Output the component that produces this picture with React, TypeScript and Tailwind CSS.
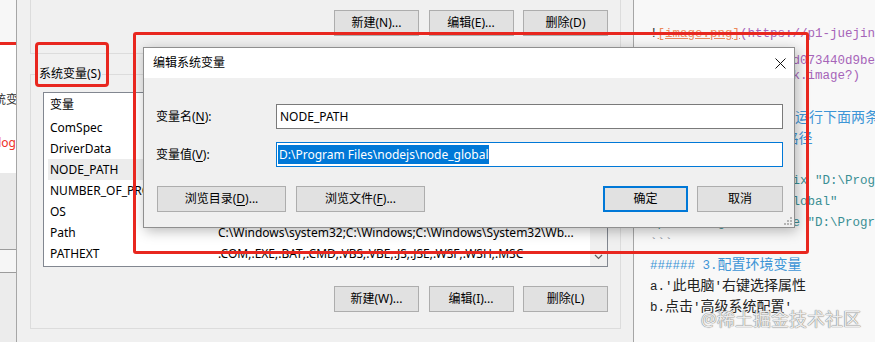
import type { ReactNode } from "react";

const uiFont = "font-['Noto_Sans','Noto_Sans_CJK_SC',sans-serif]";
const monoFont = "font-['Liberation_Mono','Noto_Sans_CJK_SC',monospace]";

type WinButtonProps = {
  children: ReactNode;
  className?: string;
  isDefault?: boolean;
};

function WinButton({ children, className = "", isDefault = false }: WinButtonProps) {
  const border = isDefault ? "border-2 border-[#0078d7]" : "border border-[#adadad]";
  return (
    <div
      className={`flex h-[26px] shrink-0 items-center justify-center bg-[#e1e1e1] text-[12px] text-black ${border} ${className}`}
    >
      {children}
    </div>
  );
}

function Key({ children }: { children: ReactNode }) {
  return <span className="underline underline-offset-2">{children}</span>;
}

function ChevronDown() {
  return (
    <svg width="9" height="6" viewBox="0 0 9 6" fill="none">
      <path d="M1 1 L4.5 4.5 L8 1" stroke="#606060" strokeWidth="1.2" />
    </svg>
  );
}

function ChevronUp() {
  return (
    <svg width="9" height="6" viewBox="0 0 9 6" fill="none">
      <path d="M1 5 L4.5 1.5 L8 5" stroke="#606060" strokeWidth="1.2" />
    </svg>
  );
}

function LeftStrip() {
  return (
    <div className={`flex w-[16px] shrink-0 flex-col ${uiFont}`}>
      <div className="h-[42px] bg-[#f7f7f7]" />
      <div className="h-[3px] bg-[#e8271f]" />
      <div className="h-[128px] overflow-hidden bg-white pt-[47px] text-[12px]">
        <div className="-ml-[18px] h-[16px] whitespace-nowrap leading-[16px] text-[#333]">系统变量</div>
        <div className="mt-[27px] flex h-[16px] justify-end whitespace-nowrap leading-[16px] text-[#ee2f27]">
          Blog
        </div>
      </div>
      <div className="h-[76px] bg-[#e9e9e9]" />
      <div className="h-[1px] bg-[#9c9c9c]" />
      <div className="h-[22px] bg-[#f6f6f6]" />
      <div className="h-[1px] bg-[#9c9c9c]" />
      <div className="flex-1 bg-[#ececec]" />
    </div>
  );
}

const variables = [
  { name: "ComSpec", value: "C:\\Windows\\system32\\cmd.exe" },
  { name: "DriverData", value: "C:\\Windows\\System32\\Drivers\\DriverData" },
  { name: "NODE_PATH", value: "D:\\Program Files\\nodejs\\node_global" },
  { name: "NUMBER_OF_PROCESSORS", value: "8" },
  { name: "OS", value: "Windows_NT" },
  { name: "Path", value: "C:\\Windows\\system32;C:\\Windows;C:\\Windows\\System32\\Wb..." },
  { name: "PATHEXT", value: ".COM;.EXE;.BAT;.CMD;.VBS;.VBE;.JS;.JSE;.WSF;.WSH;.MSC" },
];

function VariableList() {
  return (
    <div className="mt-[10px] flex h-[175px] border border-[#828790] bg-white text-[12px] text-black">
      <div className="min-w-0 flex-1">
        <div className="mx-[4px] flex h-[24px] items-center px-[2px]">
          <div className="w-[168px] shrink-0">变量</div>
          <div>值</div>
        </div>
        {variables.map((variable) => (
          <div
            key={variable.name}
            className={`mx-[4px] flex h-[21px] items-center px-[2px] ${variable.name === "NODE_PATH" ? "bg-[#ececec]" : ""}`}
          >
            <div className="w-[168px] shrink-0 overflow-hidden whitespace-nowrap">{variable.name}</div>
            <div className="min-w-0 whitespace-nowrap">{variable.value}</div>
          </div>
        ))}
      </div>
      <div className="flex w-[17px] shrink-0 flex-col items-center justify-between bg-[#f0f0f0] py-[6px]">
        <ChevronUp />
        <ChevronDown />
      </div>
    </div>
  );
}

function EnvironmentWindow() {
  return (
    <div className={`flex w-[618px] shrink-0 flex-col border-x border-[#a6a6a6] bg-[#f0f0f0] pl-[13px] pr-[12px] ${uiFont}`}>
      <div className="flex h-[54px] shrink-0 justify-end gap-[9.5px] border-x border-b border-[#dcdcdc] pr-[12px] pt-[10px]">
        <WinButton className="w-[85px]">新建(N)...</WinButton>
        <WinButton className="w-[85px]">编辑(E)...</WinButton>
        <WinButton className="w-[85px]">删除(D)</WinButton>
      </div>
      <fieldset className="mt-[12px] border border-[#dcdcdc] px-[12px] pb-[16px]">
        <legend className="-ml-[5px] px-[1px] text-[12px] leading-[16px] text-black">系统变量(S)</legend>
        <VariableList />
        <div className="mt-[19px] flex justify-end gap-[9.5px]">
          <WinButton className="w-[85px]">新建(W)...</WinButton>
          <WinButton className="w-[85px]">编辑(I)...</WinButton>
          <WinButton className="w-[85px]">删除(L)</WinButton>
        </div>
      </fieldset>
    </div>
  );
}

function Line({ children, className = "h-[21px]" }: { children?: ReactNode; className?: string }) {
  return <div className={`whitespace-nowrap leading-[21px] ${className}`}>{children}</div>;
}

function Cjk({ children }: { children: ReactNode }) {
  return <span className="text-[14px]">{children}</span>;
}

function MarkdownEditor() {
  return (
    <div className={`relative min-w-0 flex-1 overflow-hidden bg-[#f8f8f8] pl-[16px] pt-[24px] text-[12.5px] ${monoFont}`}>
      <Line className="h-[27px]">
        <span className="text-[#333]">!</span>
        <span className="text-[#ec8a5c] underline">[image.png]</span>
        <span className="text-[#a664b8]">(https://p1-juejin.byteimg.com/tos-cn-i-k3u1fbpfcp/</span>
      </Line>
      <Line className="h-[15px]">
        <span className="text-[#a664b8]">a2c6f7b41e8c4b3f9a6d073440d9be~tplv-</span>
      </Line>
      <Line>
        <span className="text-[#a664b8]">k3u1fbpfcp-watermark.image?)</span>
      </Line>
      <Line />
      <Line>
        <span className="text-[#3d95d6]">
          ###### 2.<Cjk>新建文件夹</Cjk>,<Cjk>运行下面两条命令设置全局路</Cjk>
        </span>
      </Line>
      <Line>
        <span className="text-[#3d95d6]">
          <Cjk>设置</Cjk>npm<Cjk>全局模块存放路径</Cjk>
        </span>
      </Line>
      <Line>
        <span className="text-[#7d8a96]">```</span>
      </Line>
      <Line>
        <span className="text-[#3a8f94]">npm config set prefix "D:\Program</span>
      </Line>
      <Line>
        <span className="text-[#3a8f94]">Files\nodejs\node_global"</span>
      </Line>
      <Line>
        <span className="text-[#3a8f94]">npm config set cache "D:\Program Files\nodejs\node_cache"</span>
      </Line>
      <Line>
        <span className="text-[#7d8a96]">```</span>
      </Line>
      <Line>
        <span className="text-[#3d95d6]">
          ###### 3.<Cjk>配置环境变量</Cjk>
        </span>
      </Line>
      <Line>
        <span className="text-[#222]">
          a.'<Cjk>此电脑</Cjk>'<Cjk>右键选择属性</Cjk>
        </span>
      </Line>
      <Line>
        <span className="text-[#222]">
          b.<Cjk>点击</Cjk>'<Cjk>高级系统配置</Cjk>'
        </span>
      </Line>
      <div
        className={`absolute bottom-[13px] right-[14px] text-[18px] leading-[20px] text-[#ececec] [text-shadow:0_0_1px_#7a7a7a,0_0_1px_#7a7a7a] ${uiFont}`}
      >
        @稀土掘金技术社区
      </div>
    </div>
  );
}

function CloseIcon() {
  return (
    <svg width="11" height="11" viewBox="0 0 11 11" fill="none">
      <path d="M0.5 0.5 L10.5 10.5 M10.5 0.5 L0.5 10.5" stroke="#111" strokeWidth="1" />
    </svg>
  );
}

function ResizeGrip() {
  return (
    <svg width="10" height="10" viewBox="0 0 10 10" className="absolute bottom-[2px] right-[2px]">
      <g fill="#b4b4b4">
        <rect x="8" y="2" width="2" height="2" />
        <rect x="5" y="5" width="2" height="2" />
        <rect x="8" y="5" width="2" height="2" />
        <rect x="2" y="8" width="2" height="2" />
        <rect x="5" y="8" width="2" height="2" />
        <rect x="8" y="8" width="2" height="2" />
      </g>
    </svg>
  );
}

function EditVariableDialog() {
  return (
    <div
      className={`absolute left-[143px] top-[47px] flex w-[652px] flex-col border border-[#8f8f8f] bg-[#f0f0f0] text-[12px] text-black shadow-[2px_3px_12px_rgba(0,0,0,0.28)] ${uiFont}`}
    >
      <div className="flex h-[30px] items-center justify-between bg-white pl-[9px] pr-[8px]">
        <span className="text-[12px]">编辑系统变量</span>
        <CloseIcon />
      </div>
      <div className="relative flex flex-col pb-[15px] pl-[12px] pr-[11px] pt-[26px]">
        <div className="flex items-center">
          <div className="w-[120px] shrink-0">
            变量名(<Key>N</Key>):
          </div>
          <div className="flex h-[25px] flex-1 items-center border border-[#7a7a7a] bg-white px-[3px]">NODE_PATH</div>
        </div>
        <div className="mt-[13px] flex items-center">
          <div className="w-[120px] shrink-0">
            变量值(<Key>V</Key>):
          </div>
          <div className="flex h-[25px] flex-1 items-center border border-[#0078d7] bg-white px-[1px]">
            <span className="bg-[#0078d7] px-[1px] leading-[19px] text-white">D:\Program Files\nodejs\node_global</span>
          </div>
        </div>
        <div className="mt-[19px] flex justify-between">
          <div className="flex gap-[10px] pl-[1px]">
            <WinButton className="w-[129px]">
              浏览目录(<Key>D</Key>)...
            </WinButton>
            <WinButton className="w-[129px]">
              浏览文件(<Key>F</Key>)...
            </WinButton>
          </div>
          <div className="flex gap-[9px]">
            <WinButton className="w-[85px]" isDefault>
              确定
            </WinButton>
            <WinButton className="w-[86px]">取消</WinButton>
          </div>
        </div>
        <ResizeGrip />
      </div>
    </div>
  );
}

export default function App() {
  return (
    <div className="relative flex h-[342px] w-[875px] overflow-hidden bg-[#f0f0f0]">
      <LeftStrip />
      <EnvironmentWindow />
      <MarkdownEditor />
      <EditVariableDialog />
      <div className="pointer-events-none absolute left-[133px] top-[32px] h-[222px] w-[676px] rounded-[3px] border-[3px] border-[#e8271f]" />
      <div className="pointer-events-none absolute left-[35px] top-[42px] h-[45px] w-[74px] rounded-[4px] border-[3px] border-[#e8271f]" />
    </div>
  );
}
